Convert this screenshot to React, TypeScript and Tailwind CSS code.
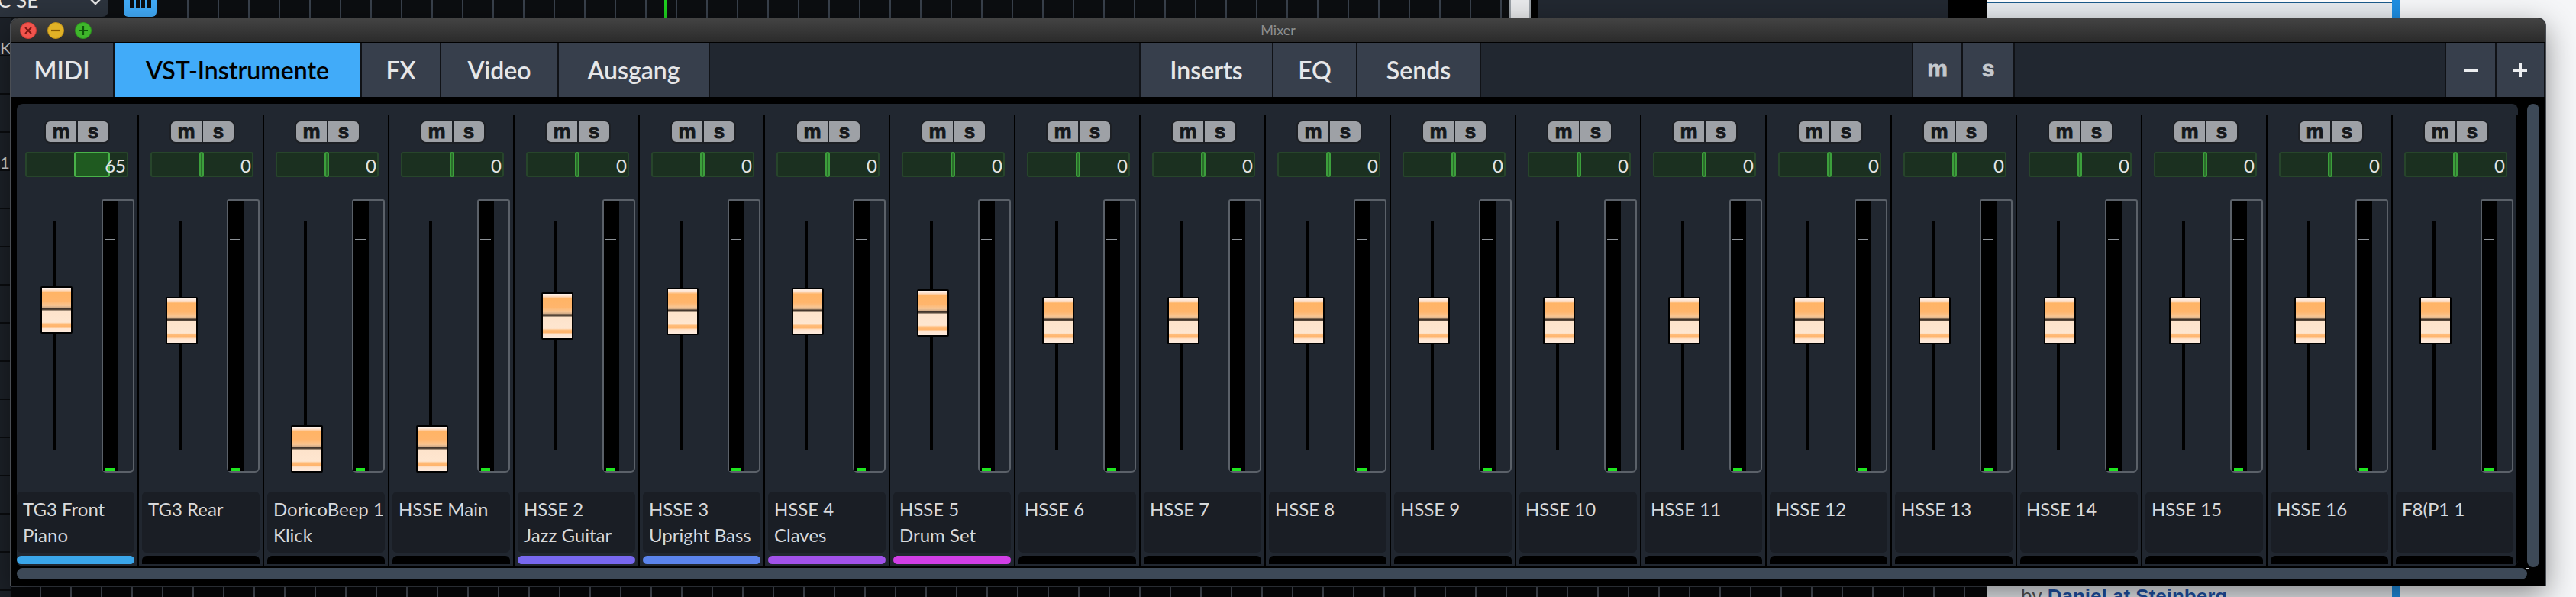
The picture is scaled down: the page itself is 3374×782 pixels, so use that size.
import React from "react";

type StripData = { l1: string; l2?: string; pan?: number; cap: number; color?: string };

const strips: StripData[] = [
  { l1: "TG3 Front", l2: "Piano", pan: 65, cap: 375, color: "#3aa6ea" },
  { l1: "TG3 Rear", cap: 389 },
  { l1: "DoricoBeep 1", l2: "Klick", cap: 557 },
  { l1: "HSSE Main", cap: 557 },
  { l1: "HSSE 2", l2: "Jazz Guitar", cap: 383, color: "#7868ef" },
  { l1: "HSSE 3", l2: "Upright Bass", cap: 377, color: "#5b84ec" },
  { l1: "HSSE 4", l2: "Claves", cap: 377, color: "#a152ea" },
  { l1: "HSSE 5", l2: "Drum Set", cap: 379, color: "#d13fe6" },
  ...Array.from({ length: 11 }, (_, i) => ({ l1: `HSSE ${i + 6}`, cap: 389 })),
  { l1: "F8(P1 1", cap: 389 },
];

const MSButton = () => (
  <div className="flex w-[86px] h-[31px] rounded-[8px] border-2 border-[#1d2025] bg-[#9ea1a6] overflow-hidden font-['Liberation_Sans',sans-serif] font-bold text-[26px] leading-none text-[#16181b] [-webkit-text-stroke:0.8px_#16181b]">
    <div className="flex-1 flex items-center justify-center pb-[2px] border-r-2 border-[#1d2025]">m</div>
    <div className="flex-1 flex items-center justify-center pb-[2px]">s</div>
  </div>
);

const PanBar = ({ value }: { value?: number }) => (
  <div className="relative w-[135px] h-[33px] rounded-[3px] border-2 border-[#27452b] bg-[#1b3020]">
    {value ? (
      <div className="absolute top-[-2px] bottom-[-2px] rounded-[3px] border-2 border-[#49b249] bg-[#1f5a20]" style={{ left: 62, width: 47 }} />
    ) : (
      <div className="absolute top-[-2px] bottom-[-2px] left-[62px] w-[6px] rounded-[3px] border-2 border-[#3c9f3c] bg-[#2a6c2a]" />
    )}
    <div className="absolute inset-0 flex items-center justify-end pr-[1px] pt-[2px] text-[24px] leading-none text-[#e4e4e4]">
      {value ?? 0}
    </div>
  </div>
);

const FaderCap = ({ top }: { top: number }) => (
  <div
    className="absolute left-[35px] w-[42px] h-[62px] border-2 border-black rounded-[2px] bg-[linear-gradient(to_bottom,#fff3ea_0%,#fde1cd_5%,#ffb466_11%,#ffb56c_30%,#f9c693_40%,#d4ad88_44%,#3f3229_47%,#5d4e40_50%,#fde3cb_52%,#fee6d0_78%,#ffbb78_82%,#ffb46c_87%,#fee4cf_91%,#feebdd_100%)]"
    style={{ top }}
  />
);

const Meter = () => (
  <div className="relative ml-[59px] mt-[29px] w-[43px] h-[358px] border-2 border-[#5b6169] rounded-t-[3px] rounded-b-[6px]">
    <div className="absolute left-0 top-0 bottom-0 w-[20px] bg-black" />
    <div className="absolute left-[2px] top-[50px] w-[14px] h-[2px] bg-[#8d9298]" />
    <div className="absolute left-[3px] bottom-0 w-[12px] h-[4px] bg-[#1fe61f]" />
  </div>
);

const Strip = ({ s }: { s: StripData }) => (
  <div className="flex w-[164px] shrink-0 h-full">
    <div className="w-[162px] flex flex-col">
      <div className="pt-[21px] pl-[40px]">
        <MSButton />
      </div>
      <div className="mt-[11px] ml-[15px]">
        <PanBar value={s.pan} />
      </div>
      <div className="relative h-[412px] flex items-start">
        <div className="ml-[52px] mt-[58px] w-[4px] h-[300px] bg-black" />
        <Meter />
        <FaderCap top={s.cap - 232} />
      </div>
      <div className="mx-[4px] h-[80px] rounded-[6px] bg-[#1a1e25] px-[8px] pt-[6px] text-[24px] leading-[34px] text-[#d7d9dc] whitespace-nowrap">
        <div>{s.l1}</div>
        {s.l2 && <div>{s.l2}</div>}
      </div>
      <div
        className={`mt-[4px] mx-[4px] h-[11px] ${s.color ? "rounded-[6px]" : "rounded-t-[6px]"}`}
        style={{ background: s.color ?? "#000" }}
      />
    </div>
    <div className="w-[2px] mt-[14px] bg-black" />
  </div>
);

const Tab = ({ label, w, active, extra = "" }: { label: React.ReactNode; w: string; active?: boolean; extra?: string }) => (
  <div
    className={`${w} h-full flex items-center justify-center border-r-2 border-[#101216] text-[32px] font-semibold ${
      active ? "bg-[#41abf9] text-black" : "bg-[#373f4c] text-[#e6e7e9]"
    } ${extra}`}
  >
    {label}
  </div>
);

const MiniGlyph = ({ c }: { c: string }) => (
  <span className="font-['Liberation_Sans',sans-serif] font-bold text-[30px] leading-none pb-[3px] text-[#c4c8cd] [-webkit-text-stroke:0.8px_#c4c8cd]">{c}</span>
);

const TrafficLights = () => (
  <div className="flex items-center gap-[14px] pl-[12px]">
    <div className="w-[22px] h-[22px] rounded-full bg-[#f2544d] border border-[#d43c35] flex items-center justify-center">
      <svg width="12" height="12" viewBox="0 0 12 12">
        <path d="M2 2L10 10M10 2L2 10" stroke="#7c1511" strokeWidth="2" />
      </svg>
    </div>
    <div className="w-[22px] h-[22px] rounded-full bg-[#e1b226] border border-[#c49418] flex items-center justify-center">
      <svg width="14" height="12" viewBox="0 0 14 12">
        <path d="M1 6H13" stroke="#875a00" strokeWidth="2.2" />
      </svg>
    </div>
    <div className="w-[22px] h-[22px] rounded-full bg-[#3fb62b] border border-[#2c9a1c] flex items-center justify-center">
      <svg width="14" height="14" viewBox="0 0 14 14">
        <path d="M1 7H13M7 1V13" stroke="#0e560a" strokeWidth="2.2" />
      </svg>
    </div>
  </div>
);

const MixerWindow = () => (
  <div className="absolute left-[14px] top-[24px] w-[3320px] h-[743px] flex flex-col bg-black rounded-t-[10px] shadow-[0_0_0_1px_#4a4e54,0_12px_40px_rgba(0,0,0,0.45)]">
    <div className="relative h-[32px] shrink-0 flex items-center rounded-t-[10px] border-b border-black bg-[linear-gradient(to_bottom,#434343,#2b2b2b)]">
      <TrafficLights />
      <div className="absolute inset-0 flex items-center justify-center text-[18px] text-[#8f8f8f] pointer-events-none">Mixer</div>
    </div>
    <div className="h-[71px] shrink-0 flex bg-[#212730]">
      <Tab label="MIDI" w="w-[136px]" />
      <Tab label="VST-Instrumente" w="w-[324px]" active />
      <Tab label="FX" w="w-[104px]" />
      <Tab label="Video" w="w-[154px]" />
      <Tab label="Ausgang" w="w-[198px]" />
      <div className="w-[562px]" />
      <Tab label="Inserts" w="w-[176px]" extra="border-l-2" />
      <Tab label="EQ" w="w-[110px]" />
      <Tab label="Sends" w="w-[162px]" />
      <div className="w-[564px]" />
      <Tab label={<MiniGlyph c="m" />} w="w-[67px]" extra="border-l-2" />
      <Tab label={<MiniGlyph c="s" />} w="w-[68px]" />
      <div className="w-[563px]" />
      <Tab
        label={
          <svg width="20" height="20" viewBox="0 0 20 20">
            <rect x="1" y="8" width="18" height="4" fill="#eceef0" />
          </svg>
        }
        w="w-[68px]"
        extra="border-l-2"
      />
      <Tab
        label={
          <svg width="20" height="20" viewBox="0 0 20 20">
            <rect x="1" y="8" width="18" height="4" fill="#eceef0" />
            <rect x="8" y="1" width="4" height="18" fill="#eceef0" />
          </svg>
        }
        w="w-[64px]"
        extra="border-r-0"
      />
    </div>
    <div className="flex-1 flex flex-col pl-[8px] pt-[9px]">
      <div className="flex h-[606px]">
        <div className="w-[3276px] h-full rounded-[8px] bg-[#212730] overflow-hidden">
          <div className="flex h-full -ml-[4px]">
            {strips.map((s, i) => (
              <Strip key={i} s={s} />
            ))}
          </div>
        </div>
        <div className="ml-[12px] w-[16px] h-[607px] rounded-full bg-[#3d4957]" />
      </div>
      <div className="relative mt-[2px] w-[3288px] h-[15px] rounded-full bg-[#3d4957]">
        <div className="absolute right-[-2px] top-0 w-[4px] h-[4px] border-l border-t border-[#cfd3d8]" />
      </div>
    </div>
  </div>
);

export default function App() {
  return (
    <div className="relative w-[3374px] h-[782px] overflow-hidden flex bg-[#111418] font-['Lato','Liberation_Sans',sans-serif]">
      {/* left: dark host application */}
      <div className="w-[2603px] h-full flex flex-col">
        <div className="h-[24px] flex shrink-0 bg-[#0c0e11]">
          <div className="w-[142px] h-[22px] rounded-br-[8px] bg-[#2c333d] flex items-start justify-between pr-[8px] overflow-hidden">
            <span className="-mt-[13px] -ml-[3px] text-[26px] leading-none text-[#e8e8e8]">C SE</span>
            <svg width="18" height="10" viewBox="0 0 18 10" className="mt-[-3px]">
              <path d="M2 1L9 8L16 1" stroke="#e0e0e0" strokeWidth="2.5" fill="none" />
            </svg>
          </div>
          <div className="ml-[20px] w-[43px] h-[22px] rounded-b-[6px] bg-[#41abf9] flex justify-center">
            <svg width="28" height="11" viewBox="0 0 28 11">
              <rect x="0" y="0" width="28" height="10" fill="#0b0d10" />
              <rect x="6" y="0" width="2" height="10" fill="#41abf9" />
              <rect x="13" y="0" width="2" height="10" fill="#41abf9" />
              <rect x="20" y="0" width="2" height="10" fill="#41abf9" />
            </svg>
          </div>
          <div className="ml-[40px] w-[1732px] h-full bg-[repeating-linear-gradient(to_right,#39414c_0px,#39414c_2px,transparent_2px,transparent_40px)] relative">
            <div className="absolute left-[625px] top-0 w-[3px] h-full bg-[#1fd11f]" />
          </div>
          <div className="w-[28px] h-full bg-[#e9eaec] border-x-2 border-[#9aa0a6]" />
          <div className="w-[10px] h-full bg-black" />
          <div className="w-[537px] h-full bg-[#222831]" />
          <div className="flex-1 h-full bg-black" />
        </div>
        <div className="flex-1 flex">
          <div className="w-[14px] h-full bg-[#1c2128] bg-[repeating-linear-gradient(to_bottom,transparent_0px,transparent_48px,#0a0c0f_48px,#0a0c0f_50px)] overflow-hidden text-[22px] text-[#cfd2d6] leading-none">
            <div className="mt-[28px]">Ka</div>
            <div className="mt-[128px]">1</div>
          </div>
          <div className="flex-1 flex flex-col">
            <div className="mt-auto h-[15px] border-t-2 border-[#3b4049] bg-[#07080a] bg-[repeating-linear-gradient(to_right,transparent_0px,transparent_38px,#4a505a_38px,#4a505a_40px)]" />
          </div>
        </div>
      </div>
      {/* right: light web page */}
      <div className="flex-1 h-full flex">
        <div className="w-[530px] h-full flex flex-col bg-[#e7ebef] border-t-[2px] border-white">
          <div className="h-[2px] bg-[#1b5b8b]" />
          <div className="mt-auto -mb-[12px] pl-[44px] text-[26px] leading-none font-['Liberation_Sans',sans-serif] whitespace-nowrap">
            <span className="text-[#555]">by </span>
            <span className="font-bold text-[#1e52a6]">Daniel at Steinberg</span>
          </div>
        </div>
        <div className="w-[10px] h-full bg-[#1f8fe3]" />
        <div className="flex-1 h-full bg-[#f5f6f8]" />
      </div>
      <MixerWindow />
    </div>
  );
}
